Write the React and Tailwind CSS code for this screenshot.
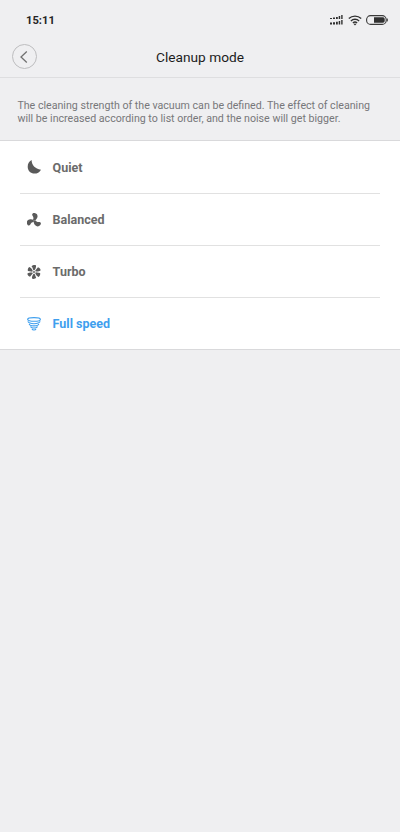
import React, { useState } from 'react';

function SignalIcon() {
  return (
    <svg width="14" height="10" viewBox="0 0 14 10" fill="#303030">
      <path d="M0 3h2v1H0zM3 2.6h2V4H3zM6 2h1.8v2H6zM8.7 1h1.5v3H8.7zM11.2 0h1.4v4h-1.4z" />
      <path d="M0 7.6h2v1.8H0zM3 7.2h2v2.2H3zM6 6.8h1.8v2.6H6zM8.7 6h1.5v3.4H8.7zM11.2 5h1.4v4.4h-1.4z" />
    </svg>
  );
}

function WifiIcon() {
  return (
    <svg width="14" height="11" viewBox="0 0 14 11" fill="none" stroke="#303030" strokeWidth="1.4">
      <path d="M0.8 3.6a9 9 0 0 1 12.4 0" />
      <path d="M2.9 5.9a6 6 0 0 1 8.2 0" />
      <path d="M4.9 8a3 3 0 0 1 4.2 0" />
      <path d="M5.6 9.1L7 10.6l1.4-1.5a2 2 0 0 0-2.8 0z" fill="#303030" stroke="none" />
    </svg>
  );
}

function BatteryIcon() {
  return (
    <svg width="22" height="10" viewBox="0 0 22 10">
      <rect x="0.6" y="0.6" width="19.6" height="8.8" rx="4" fill="none" stroke="#3a3a3a" strokeWidth="1.1" />
      <path d="M8 2.2h9a1.7 1.7 0 0 1 1.7 1.7v2.2A1.7 1.7 0 0 1 17 7.8H8z" fill="#303030" />
      <path d="M21.3 3.6v2.8" stroke="#3a3a3a" strokeWidth="1" />
    </svg>
  );
}

function MoonIcon() {
  return (
    <svg width="14" height="14" viewBox="0 0 14 14" fill="#5a5a5a">
      <path d="M4.6 0C4.6 4.6 8 9.2 14 9.7C12.5 12.3 10.2 13.6 7.5 13.6C3.7 13.6 0.7 10.6 0.7 6.7C0.7 3.7 2 1.2 4.6 0z" />
    </svg>
  );
}

function FanIcon() {
  return (
    <svg width="14" height="14" viewBox="0 0 14 14" fill="#5a5a5a">
      {[0, 120, 240].map((angle) => (
        <path
          key={angle}
          d="M6 6.8C6.9 5.2 6.4 3.7 5.3 2.3C4.8 0.8 5.9-0.1 7.6 0.1C9.8 0.4 11 2.3 10.4 4.3C10 5.9 8.9 7.1 7.4 7.8z"
          transform={`rotate(${angle} 7 7.7)`}
        />
      ))}
    </svg>
  );
}

function TurboIcon() {
  return (
    <svg width="14" height="14" viewBox="0 0 14 14" fill="#5a5a5a">
      {[0, 60, 120, 180, 240, 300].map((angle) => (
        <path
          key={angle}
          d="M6.4 5.3L4.9 1.2C5.7 0 8.2-0.2 9 0.6C9.2 2.3 8.4 3.9 7.4 5.3z"
          transform={`rotate(${angle} 7 7)`}
        />
      ))}
      <circle cx="7" cy="7" r="0.9" />
    </svg>
  );
}

function TornadoIcon() {
  return (
    <svg width="14" height="14" viewBox="0 0 14 14" fill="none" stroke="#3f9fee" strokeWidth="1.1">
      <ellipse cx="7" cy="2.4" rx="6.4" ry="1.8" />
      <path d="M1 4.3C0.9 7.5 13.1 7.5 13 4.3" />
      <path d="M2.2 6.8C2.6 9.5 11.4 9.5 11.8 6.8" />
      <path d="M3.6 9.3C4.1 11.5 9.9 11.5 10.4 9.3" />
      <path d="M5 11.8C5.5 13.4 8.5 13.4 9 11.8" />
    </svg>
  );
}

const modes = [
  { name: 'Quiet', icon: MoonIcon },
  { name: 'Balanced', icon: FanIcon },
  { name: 'Turbo', icon: TurboIcon },
  { name: 'Full speed', icon: TornadoIcon },
];

function App() {
  const [selected, setSelected] = useState('Full speed');

  return (
    <div className="min-h-screen bg-[#efeff1] font-[Roboto,sans-serif]">
      <div className="flex h-10 items-center justify-between pl-[26px] pr-[12px]">
        <span className="pt-[2px] text-[11.2px] font-bold text-[#252525]">15:11</span>
        <div className="flex items-center gap-[4px]">
          <SignalIcon />
          <WifiIcon />
          <BatteryIcon />
        </div>
      </div>

      <header className="grid h-[38px] grid-cols-[1fr_auto_1fr] border-b border-[#dedee0] px-3">
        <button className="mt-1 flex h-[25px] w-[25px] items-center justify-center rounded-full border border-[#bdbdbf] pr-[2px]" aria-label="Back">
          <svg width="8" height="12" viewBox="0 0 8 12" fill="none" stroke="#707070" strokeWidth="1.3">
            <path d="M6.8 0.6L1 6l5.8 5.4" />
          </svg>
        </button>
        <h1 className="pt-[7px] text-[13.7px] leading-5 text-[#1c1c1c]">Cleanup mode</h1>
      </header>

      <p className="h-[62px] whitespace-nowrap pl-[17.4px] pt-[21px] text-[10.65px] leading-[13px] text-[#77777a]">
        The cleaning strength of the vacuum can be defined. The effect of cleaning
        <br />
        will be increased according to list order, and the noise will get bigger.
      </p>

      <ul className="border-y border-[#d9d9db] bg-white px-5">
        {modes.map(({ name, icon: Icon }) => (
          <li key={name} className="h-[52px] border-b border-[#e1e1e1] first:h-[53px] last:h-[51px] last:border-b-0">
            <button
              onClick={() => setSelected(name)}
              className={`flex h-full w-full items-center gap-[11.6px] pl-[7px] text-[12.5px] font-bold ${
                selected === name ? 'text-[#3f9fee]' : 'text-[#6b6b6b]'
              }`}
            >
              <Icon />
              <span className="pt-[2px]">{name}</span>
            </button>
          </li>
        ))}
      </ul>
    </div>
  );
}

export default App;
